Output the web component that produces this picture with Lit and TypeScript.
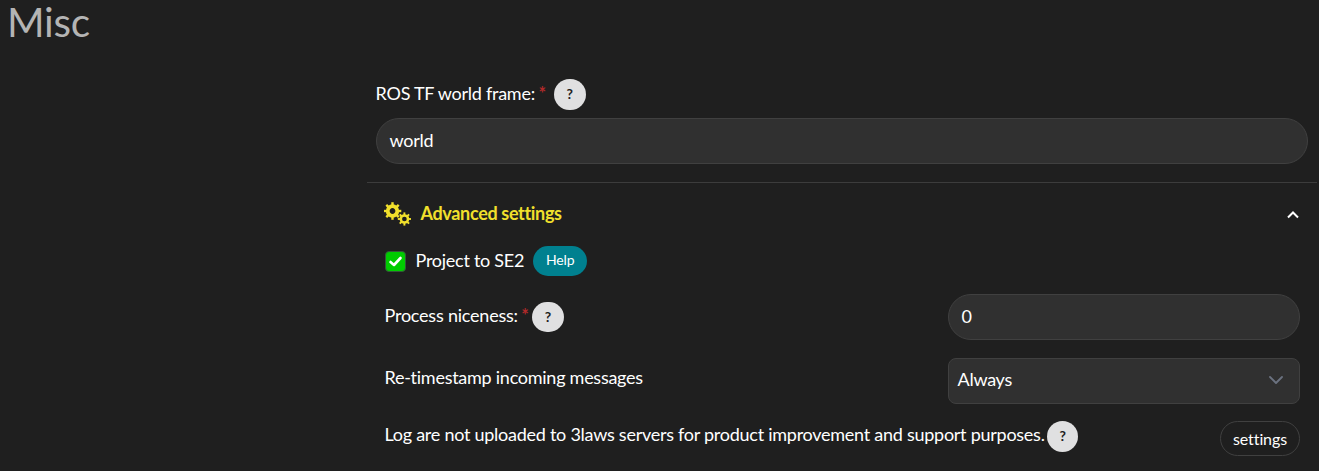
import { LitElement, html, css, svg } from "lit";
import { customElement } from "lit/decorators.js";

const gear = (cx: number, cy: number, body: number, ring: number, reach: number, tooth: number) => svg`
  <g transform="translate(${cx} ${cy})" stroke="#f1e02c" fill="none">
    <circle r=${body} stroke-width=${ring}></circle>
    ${[0, 45, 90, 135, 180, 225, 270, 315].map(
      (a) => svg`<path d="M0 ${-body}V${-reach}" stroke-width=${tooth} transform="rotate(${a})"></path>`
    )}
  </g>`;

@customElement("app-root")
export class AppRoot extends LitElement {
  static styles = css`
    :host {
      display: block;
      height: 471px;
      background: #1f1f1f;
      color: #fff;
      font: 18px/24px Lato, sans-serif;
      letter-spacing: -0.26px;
    }
    * { box-sizing: border-box; }
    .page { display: flex; flex-direction: column; }
    .title { margin: 0; height: 79px; padding-left: 7px; font-size: 40.5px; line-height: 44px; font-weight: 400; color: #b4b4b4; }
    .form { margin: 0 2px 0 367px; }
    .field { padding: 0 9px 18px; border-bottom: 1px solid #3c3c3c; height: 104px; }
    .label { display: flex; height: 39px; }
    .label .text { margin-left: -0.4px; }
    .text { line-height: 28px; white-space: nowrap; }
    .star { color: #b02a2a; line-height: 29px; margin-left: 3.5px; width: 7px; font-weight: 700; }
    .help { width: 32px; height: 31px; border-radius: 16px; background: #e0e0e1; color: #1f1f1f; font-size: 14px; line-height: 29px; font-weight: 700; text-align: center; flex: none; letter-spacing: 0; }
    .wide { margin-left: 8.4px; }
    .near { margin-left: 3.5px; }
    .nice .text { letter-spacing: -0.22px; }
    .nice .help { height: 30px; }
    .log .help { width: 31px; margin-left: 2.6px; }
    .input { width: 100%; height: 46px; border: 1px solid #404040; border-radius: 23px; background: #303030; padding: 0 12.6px; line-height: 42px; }
    .body { padding: 0 17px 0 17.5px; }
    .head { display: flex; align-items: center; height: 62px; margin-bottom: 1px; color: #f1e02c; font-weight: 700; letter-spacing: -0.33px; }
    .name { padding-bottom: 2px; }
    .gears { width: 27px; height: 24px; margin: 0 9.6px 0 -0.6px; flex: none; }
    .grow { flex: 1; }
    .up { width: 14px; height: 10px; margin-top: 1px; }
    .check { display: flex; height: 30px; align-items: center; }
    .project { padding-bottom: 2px; }
    .box { width: 21px; height: 21px; border-radius: 4px; background: #00cc00; border: 1px solid #35553a; margin-right: 10px; }
    .box svg { display: block; }
    .pill { width: 54px; height: 30px; border-radius: 15px; background: #00808f; font-size: 14px; line-height: 28px; text-align: center; margin-left: 9px; letter-spacing: -0.1px; }
    .row { display: flex; justify-content: space-between; }
    .nice { margin-top: 18px; height: 46px; }
    .left { display: flex; padding-top: 8px; }
    .nice .text, .nice .star { line-height: 27px; }
    .nice .input { line-height: 43px; }
    .control { width: 352px; }
    .stamp { margin-top: 18px; height: 46px; }
    .stamp .left { padding-top: 5px; }
    .select { width: 352px; height: 46px; border: 1px solid #404040; border-radius: 8px; background: #303030; padding: 0 15px 2px 9px; display: flex; justify-content: space-between; align-items: center; }
    .value { padding-bottom: 2px; margin-left: -0.5px; }
    .log { margin-top: 17px; }
    .log .left { padding: 0; }
    .log .text { line-height: 26px; }
    .button { width: 80px; height: 35px; border: 1px solid #404040; border-radius: 18px; font-size: 16px; line-height: 33px; text-align: center; letter-spacing: -0.1px; }
  `;

  render() {
    return html`
      <div class="page">
        <h1 class="title">Misc</h1>
        <div class="form">
          <div class="field">
            <div class="label"><span class="text">ROS TF world frame:</span><span class="star">*</span><span class="help wide">?</span></div>
            <div class="input">world</div>
          </div>
          <div class="body">
            <div class="head">
              <svg class="gears" viewBox="0 0 27 24">${gear(8.5, 9, 4.8, 3.8, 8.8, 2.4)}${gear(20.4, 17, 3.6, 2.5, 6.6, 1.9)}</svg>
              <span class="name">Advanced settings</span>
              <span class="grow"></span>
              <svg class="up" viewBox="0 0 14 10"><path d="M2 7.5 7 2.5 12 7.5" fill="none" stroke="#fff" stroke-width="2"/></svg>
            </div>
            <div class="check">
              <span class="box"><svg width="19" height="19" viewBox="0 0 19 19"><path d="M4.5 10 8 13 14.5 6" fill="none" stroke="#fff" stroke-width="2.6" stroke-linecap="round" stroke-linejoin="round"/></svg></span>
              <span class="project">Project to SE2</span><span class="pill">Help</span>
            </div>
            <div class="row nice">
              <div class="left"><span class="text">Process niceness:</span><span class="star">*</span><span class="help near">?</span></div>
              <div class="control"><div class="input">0</div></div>
            </div>
            <div class="row stamp">
              <div class="left"><span class="text">Re-timestamp incoming messages</span></div>
              <div class="select"><span class="value">Always</span><svg width="16" height="10" viewBox="0 0 16 10"><path d="M2 2 8 8 14 2" fill="none" stroke="#6b7280" stroke-width="1.8" stroke-linecap="round" stroke-linejoin="round"/></svg></div>
            </div>
            <div class="row log">
              <div class="left"><span class="text">Log are not uploaded to 3laws servers for product improvement and support purposes.</span><span class="help near">?</span></div>
              <div class="button">settings</div>
            </div>
          </div>
        </div>
      </div>`;
  }
}
